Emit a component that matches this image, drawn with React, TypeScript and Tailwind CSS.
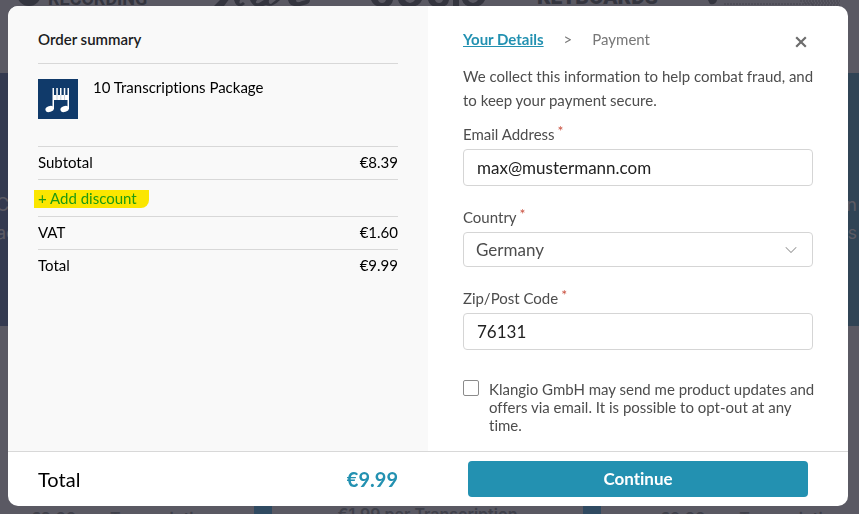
import type { ReactNode } from "react";
import { ChevronDown } from "lucide-react";

function Logos() {
  return (
    <div className="flex h-[73px] items-start overflow-hidden bg-[#5a5963]">
      <svg className="h-2 w-full" viewBox="0 0 859 8" preserveAspectRatio="none" fill="#34353f">
        <circle cx="29" cy="-6" r="12" />
        <text x="48" y="5" fontSize="18" fontWeight="700" fontFamily="Roboto, sans-serif">RECORDING</text>
        <path d="M214 6l8-8h8l-6 8zM234 0h6q-2 6 3 2l2 2q-8 6-11-4zM250 0h7q-3 4 2 3l5-3h5q-1 4 2 4l5-4h4q-8 8-14 5-12 5-16-5zM288 0h8q0 4 6 1l4-1h4q0 4-6 5-14 4-16-5z" />
        <path d="M371 0q3 8 14 7 7-1 8-7h-7q-1 3-4 3-3 0-4-3zM398 0q2 8 12 7 9 0 12-7h-7q-2 3-5 3t-5-3zM428 0q2 8 12 7 8 0 9-7h-6q-1 3-4 3t-4-3zM453 0h6v6h-6zM462 0q2 7 11 7t12-7h-7q-2 3-5 3t-5-3z" />
        <text x="537" y="4" fontSize="21" fontWeight="900" fontFamily="Roboto, sans-serif">KEYBOARDS</text>
        <path d="M708 0h9q-1 5-7 4z" />
        <path d="M724 4h90M800 1h40M804 3h36M812 5h28" stroke="#44454e" strokeDasharray="2 1" />
      </svg>
    </div>
  );
}

function Backdrop() {
  return (
    <div aria-hidden="true" className="fixed inset-0 overflow-hidden bg-[#5a5963] font-['Inter',sans-serif] text-[#3f404a]">
      <Logos />
      <div className="flex h-[253px] justify-between overflow-hidden bg-linear-to-r from-[#343a50] to-[#304455] pt-[118px] text-lg leading-7 text-[#5c5b64]">
        <p className="-ml-1">C<br />ac</p>
        <p className="mr-[2px] text-right">n<br />s</p>
      </div>
      <div className="flex h-[188px] gap-[18px] bg-[#304a61] text-base font-semibold">
        <p className="w-[254px] bg-[#5a5963] pt-[182px] pl-[30px] leading-5 whitespace-nowrap">€2.99 per Transcription</p>
        <p className="flex-1 bg-[#5a5963] pt-[178px] text-center leading-5 whitespace-nowrap">€1.99 per Transcription</p>
        <p className="w-[258px] bg-[#5a5963] pt-[182px] pl-[58px] leading-5 whitespace-nowrap">€0.99 per Transcription</p>
      </div>
    </div>
  );
}

function PackageIcon() {
  return (
    <svg viewBox="0 0 40 40" className="size-10 shrink-0 bg-[#103a6a]" fill="#fff" aria-hidden="true">
      <ellipse cx="11.6" cy="30" rx="4.3" ry="2.9" transform="rotate(-18 11.6 30)" />
      <ellipse cx="26.6" cy="30" rx="4.3" ry="2.9" transform="rotate(-18 26.6 30)" />
      <path d="M14.500 9H16v21h-1.500zM29.500 9H31v21h-1.500zM18.300 9h1.500v8h-1.500zM22 9h1.500v8H22zM25.800 9h1.500v8h-1.500zM15 16h15.500v5H15z" />
      <path d="M19 16v5M22.800 16v5M26.500 16v5" stroke="#8ea5bd" strokeWidth=".5" />
    </svg>
  );
}

function SummaryRow({ label, value }: { label: string; value: string }) {
  return (
    <div className="flex h-[33px] items-center justify-between border-t border-[#d8d8d8] pb-px">
      <dt>{label}</dt>
      <dd>{value}</dd>
    </div>
  );
}

function OrderSummary() {
  return (
    <section className="bg-[#f9f9f9] px-[30px] pt-[21px] text-black">
      <h2 className="pb-3 leading-6 font-semibold text-[#1c1c22]">Order summary</h2>
      <div className="flex h-[83px] gap-[15px] border-t border-[#d8d8d8] pt-[15px]">
        <PackageIcon />
        <p className="leading-4">10 Transcriptions Package</p>
      </div>
      <dl>
        <SummaryRow label="Subtotal" value="€8.39" />
        <div className="h-[37px] border-t border-[#d8d8d8] pt-[10px]">
          <button type="button" className="-ml-1 block h-[18px] rounded-br-lg bg-[#fbe600] pr-3 pb-[2px] pl-1 leading-4 text-[#1f9a10]">
            + Add discount
          </button>
        </div>
        <SummaryRow label="VAT" value="€1.60" />
        <SummaryRow label="Total" value="€9.99" />
      </dl>
    </section>
  );
}

function Label({ htmlFor, children }: { htmlFor: string; children: ReactNode }) {
  return (
    <label htmlFor={htmlFor} className="flex h-6 items-start gap-[3px] leading-[18px]">
      {children}
      <span className="text-sm leading-3 text-[#c9503f]">*</span>
    </label>
  );
}

const field = "block w-full rounded border border-[#d5d5d5] bg-white pr-3 text-[17px]";

function Details() {
  return (
    <section className="px-[35px] pt-[21px] text-[#4d4d4d]">
      <div className="flex items-start justify-between">
        <nav className="flex items-center gap-5 leading-6">
          <a href="#details" className="font-bold text-[#2391b1] underline">Your Details</a>
          <span className="text-[#777]">&gt;</span>
          <span className="text-[#777]">Payment</span>
        </nav>
        <button type="button" aria-label="Close" className="mt-[9px] mr-[6px] size-3">
          <svg viewBox="0 0 12 12" className="size-3" stroke="#6d6d6d" strokeWidth="2.200" aria-hidden="true">
            <path d="M1.200 1.200l9.600 9.600M10.800 1.200l-9.600 9.600" />
          </svg>
        </button>
      </div>
      <p className="-mr-3 pt-[13px] leading-6">We collect this information to help combat fraud, and to keep your payment secure.</p>
      <form id="details" className="pt-[13px]">
        <Label htmlFor="email">Email Address</Label>
        <input id="email" type="email" defaultValue="max@mustermann.com" className={`${field} h-[37px] pl-[13px] text-[#222]`} />
        <div className="pt-[22px]">
          <Label htmlFor="country">Country</Label>
          <div className="relative">
            <select id="country" className={`${field} h-[35px] appearance-none pl-3 text-[#4d4d4d]`}>
              <option>Germany</option>
            </select>
            <ChevronDown className="pointer-events-none absolute top-2 right-3 size-5 text-[#999]" strokeWidth={1.25} />
          </div>
        </div>
        <div className="pt-[22px]">
          <Label htmlFor="zip">Zip/Post Code</Label>
          <input id="zip" type="text" defaultValue="76131" className={`${field} h-[37px] pl-[13px] text-[#222]`} />
        </div>
        <div className="-mr-3 flex gap-[10px] pt-[30px] pb-[17px]">
          <input id="updates" type="checkbox" className="size-4 shrink-0 appearance-none rounded-xs border border-[#8b8b8b] bg-white checked:bg-[#2391b1]" />
          <label htmlFor="updates" className="leading-[18px]">
            Klangio GmbH may send me product updates and offers via email. It is possible to opt-out at any time.
          </label>
        </div>
      </form>
    </section>
  );
}

export default function App() {
  return (
    <main className="min-h-screen font-['Lato',sans-serif] text-[15px] [font-variant-ligatures:none]">
      <Backdrop />
      <div className="relative pt-[6px] pr-[11px] pb-2 pl-2">
        <div role="dialog" aria-label="Checkout" className="overflow-hidden rounded-[10px] bg-white">
          <div className="grid grid-cols-2">
            <OrderSummary />
            <Details />
          </div>
          <footer className="grid grid-cols-2 items-center border-t border-[#d8d8d8] py-[9px]">
            <div className="flex items-center justify-between px-[30px] text-xl text-black">
              <span>Total</span>
              <strong className="text-[#2391b1]">€9.99</strong>
            </div>
            <div className="px-10">
              <button type="submit" form="details" className="h-9 w-full rounded bg-[#2391b1] text-[17px] font-bold text-white">
                Continue
              </button>
            </div>
          </footer>
        </div>
      </div>
    </main>
  );
}
